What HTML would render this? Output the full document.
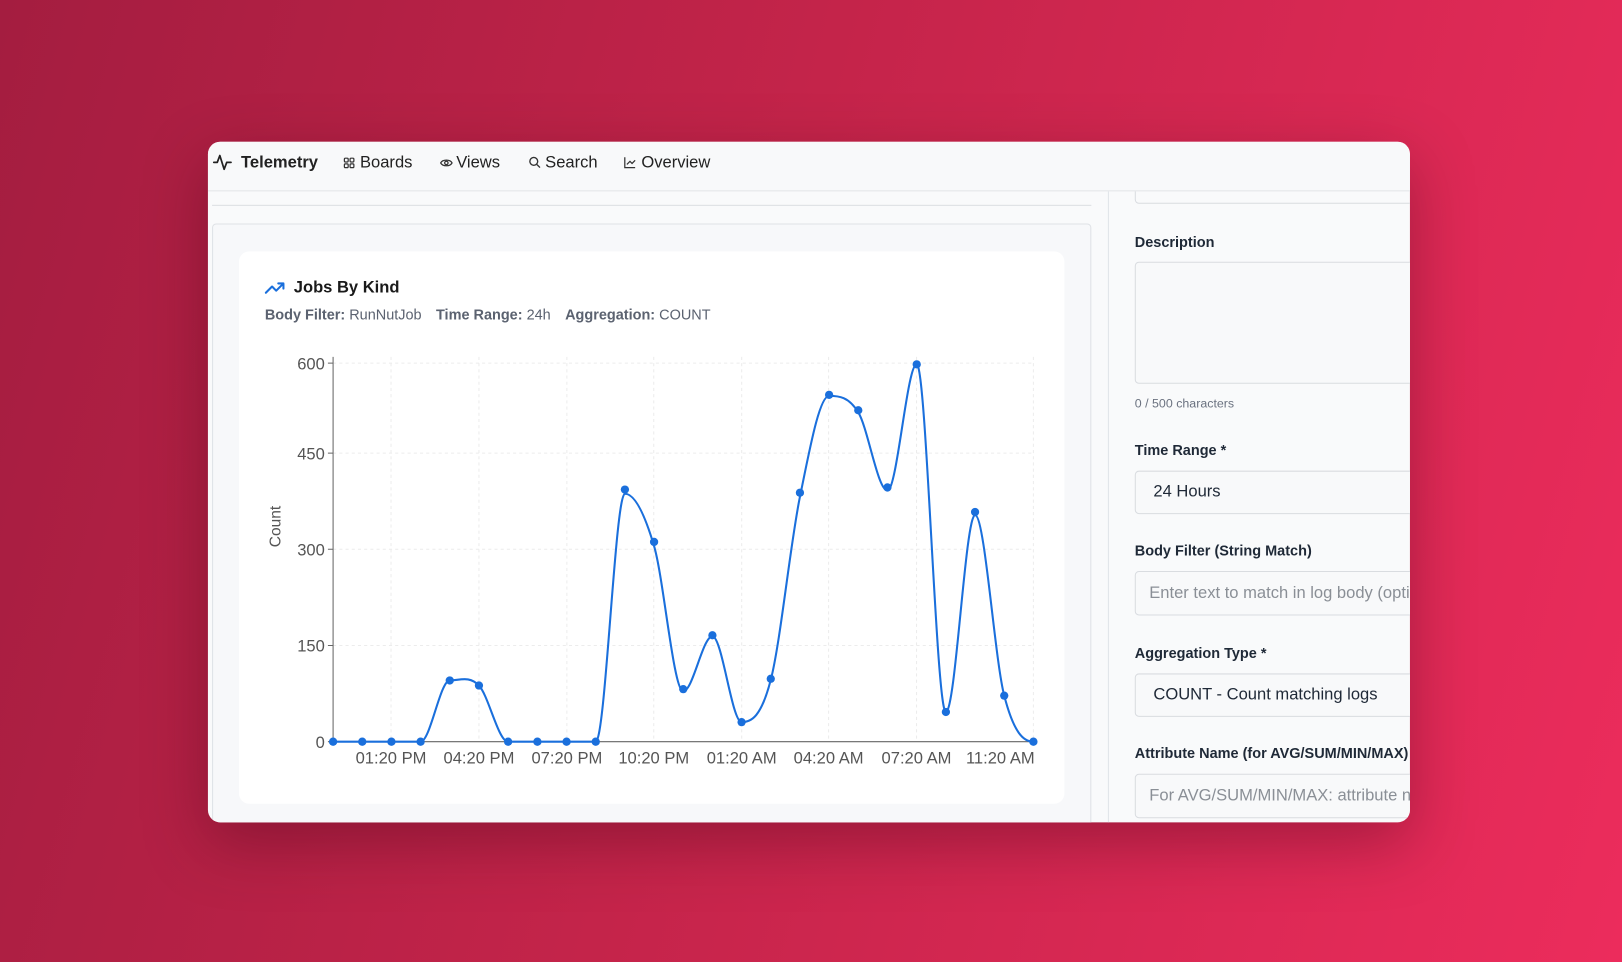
<!DOCTYPE html>
<html><head><meta charset="utf-8"><style>
*{box-sizing:border-box;margin:0;padding:0}
html,body{width:1622px;height:962px;overflow:hidden}
body{background:linear-gradient(105deg,#a41d40 0%,#c4244a 45%,#ec2c5c 100%);font-family:"Liberation Sans",sans-serif}
#s{position:absolute;left:0;top:0;width:1568px;height:930px;transform:scale(1.03444);transform-origin:0 0}
.win{position:absolute;left:201px;top:137px;width:1162px;height:658px;border-radius:12px;overflow:hidden;background:#f9fafb;box-shadow:0 20px 60px rgba(60,0,20,.35)}
.hdr{position:absolute;left:0;top:0;width:100%;height:48px;background:#f8f9fa;border-bottom:1px solid #e3e5e8;z-index:2}
.hdr span{position:absolute;top:12px;font-size:16px;color:#222}
.lbl{position:absolute;left:896px;font-size:14px;font-weight:bold;color:#1f2937;white-space:nowrap}
.inp{position:absolute;left:896px;width:300px;border:1px solid #d9dce0;border-radius:4px;background:#f8f9fa;font-size:16px;padding-left:17px;color:#1f2937;white-space:nowrap;overflow:hidden}
.ph{color:#8a8f96}
</style></head><body><div id="s">
<div class="win">
 <div class="hdr">
  <svg style="position:absolute;left:4px;top:10px" width="20" height="20" viewBox="0 0 24 24" fill="none" stroke="#222" stroke-width="2" stroke-linecap="round" stroke-linejoin="round"><path d="M2 12h4l3-8 5 16 3-8h5"/></svg>
  <span style="left:32px;font-weight:bold">Telemetry</span>
  <svg style="position:absolute;left:131px;top:15px" width="11" height="11" viewBox="0 0 12 12" fill="none" stroke="#333" stroke-width="1.3"><rect x="1" y="1" width="4" height="4" rx="1"/><rect x="7" y="1" width="4" height="4" rx="1"/><rect x="1" y="7" width="4" height="4" rx="1"/><rect x="7" y="7" width="4" height="4" rx="1"/></svg>
  <span style="left:147px">Boards</span>
  <svg style="position:absolute;left:224px;top:15px" width="13" height="11" viewBox="0 0 14 12" fill="none" stroke="#333" stroke-width="1.3"><path d="M1 6C3 2 11 2 13 6 11 10 3 10 1 6Z"/><circle cx="7" cy="6" r="1.8"/></svg>
  <span style="left:240px">Views</span>
  <svg style="position:absolute;left:310px;top:14px" width="12" height="12" viewBox="0 0 12 12" fill="none" stroke="#333" stroke-width="1.3"><circle cx="5" cy="5" r="3.8"/><path d="M8 8l3 3"/></svg>
  <span style="left:326px">Search</span>
  <svg style="position:absolute;left:402px;top:14px" width="12" height="12" viewBox="0 0 12 12" fill="none" stroke="#333" stroke-width="1.2"><path d="M1 1v10h10M3 8l3-3 2 2 3-3"/></svg>
  <span style="left:419px">Overview</span>
 </div>
 <div style="position:absolute;left:4px;top:61px;width:850px;height:1px;background:#dcdfe3"></div>
 <div style="position:absolute;left:4px;top:79px;width:850px;height:600px;border:1px solid #dfe2e6;border-radius:4px;background:#f7f8fa"></div>
 <div style="position:absolute;left:30px;top:106px;width:798px;height:534px;background:#fff;border-radius:10px"></div>
 <div style="position:absolute;left:870px;top:48px;width:1px;height:620px;background:#e1e4e8"></div>
 <div style="position:absolute;left:896px;top:20px;width:300px;height:40px;border:1px solid #d9dce0;border-radius:4px"></div>
 <div class="lbl" style="top:89px">Description</div>
 <div class="inp" style="top:116px;height:118px"></div>
 <div style="position:absolute;left:896px;top:246px;font-size:12px;color:#6b7280">0 / 500 characters</div>
 <div class="lbl" style="top:290px">Time Range *</div>
 <div class="inp" style="top:318px;height:42px;line-height:40px">24 Hours</div>
 <div class="lbl" style="top:387px">Body Filter (String Match)</div>
 <div class="inp ph" style="top:415px;height:43px;line-height:41px;padding-left:13px">Enter text to match in log body (optional)</div>
 <div class="lbl" style="top:486px">Aggregation Type *</div>
 <div class="inp" style="top:514px;height:42px;line-height:40px">COUNT - Count matching logs</div>
 <div class="lbl" style="top:583px">Attribute Name (for AVG/SUM/MIN/MAX)</div>
 <div class="inp ph" style="top:611px;height:43px;line-height:41px;padding-left:13px">For AVG/SUM/MIN/MAX: attribute name</div>
</div>
<svg style="position:absolute;left:0;top:0" width="1568" height="930">
 <path d="M257 283l6-6 4 4 7-7M269 274h5v5" fill="none" stroke="#1a6fdc" stroke-width="2" stroke-linecap="round" stroke-linejoin="round"/>
 <text x="284" y="283" font-family="Liberation Sans" font-size="16" font-weight="bold" fill="#1a1a1a">Jobs By Kind</text>
 <text x="256" y="309" font-family="Liberation Sans" font-size="14" fill="#5b6270"><tspan font-weight="bold">Body Filter:</tspan> RunNutJob <tspan dx="10" font-weight="bold">Time Range:</tspan> 24h <tspan dx="10" font-weight="bold">Aggregation:</tspan> COUNT</text>
 <g stroke="#ececec" stroke-dasharray="3 3">
  <path d="M322 351H999M322 438H999M322 531H999M322 624H999M378 345V717M463 345V717M548 345V717M632 345V717M717 345V717M801 345V717M886 345V717M999 345V717"/>
 </g>
 <path d="M322 345V717H999M317 351h5M317 438h5M317 531h5M317 624h5M317 717h5" stroke="#666" fill="none"/>
 <g font-family="Liberation Sans" font-size="16" fill="#555" text-anchor="end">
  <text x="314" y="357">600</text><text x="314" y="444">450</text><text x="314" y="537">300</text><text x="314" y="630">150</text><text x="314" y="723">0</text>
 </g>
 <text transform="translate(271 509) rotate(-90)" font-family="Liberation Sans" font-size="15" fill="#555" text-anchor="middle">Count</text>
 <g font-family="Liberation Sans" font-size="16" fill="#555" text-anchor="middle">
  <text x="378" y="738">01:20 PM</text><text x="463" y="738">04:20 PM</text><text x="548" y="738">07:20 PM</text><text x="632" y="738">10:20 PM</text><text x="717" y="738">01:20 AM</text><text x="801" y="738">04:20 AM</text><text x="886" y="738">07:20 AM</text><text x="967" y="738">11:20 AM</text>
 </g>
 <path fill="none" stroke="#1a6fdc" stroke-width="2" d="M322 717C331.4 717 340.8 717 350.2 717C359.6 717 369 717 378.4 717C387.8 717 397.2 717 406.6 717C416 717 425.4 657.8 434.8 657.8C444.2 657.8 453.6 652.8 463 662.7C472.4 672.6 481.8 717 491.2 717C500.6 717 510.1 717 519.5 717C528.9 717 538.3 717 547.7 717C557.1 717 566.5 717 575.9 717C585.3 717 594.7 477.3 604.1 477.3C613.5 477.3 622.9 496.1 632.3 527.9C641.7 559.7 651.1 668.2 660.5 668.2C669.9 668.2 679.3 615.1 688.7 615.1C698.1 615.1 707.5 698.1 716.9 698.1C726.3 698.1 735.7 693.5 745.1 657.2C754.5 620.9 763.9 526.1 773.3 480.3C782.7 434.5 792.1 382.7 801.5 382.7C810.9 382.7 820.3 383.3 829.7 398.6C839.1 413.9 848.5 474.2 857.9 474.2C867.3 474.2 876.8 352.2 886.2 352.2C895.6 352.2 905 688.3 914.4 688.3C923.8 688.3 933.2 498 942.6 498C952 498 961.4 636 970.8 672.5C980.2 709 989.6 717 999 717"/>
 <g fill="#1a6fdc">
  <circle cx="322" cy="717" r="4"/><circle cx="350.2" cy="717" r="4"/><circle cx="378.4" cy="717" r="4"/><circle cx="406.6" cy="717" r="4"/><circle cx="434.8" cy="657.8" r="4"/><circle cx="463" cy="662.7" r="4"/><circle cx="491.2" cy="717" r="4"/><circle cx="519.5" cy="717" r="4"/><circle cx="547.7" cy="717" r="4"/><circle cx="575.9" cy="717" r="4"/><circle cx="604.1" cy="473.3" r="4"/><circle cx="632.3" cy="523.9" r="4"/><circle cx="660.5" cy="666.2" r="4"/><circle cx="688.7" cy="614.1" r="4"/><circle cx="716.9" cy="698.1" r="4"/><circle cx="745.1" cy="656.2" r="4"/><circle cx="773.3" cy="476.3" r="4"/><circle cx="801.5" cy="381.7" r="4"/><circle cx="829.7" cy="396.6" r="4"/><circle cx="857.9" cy="471.2" r="4"/><circle cx="886.2" cy="352.2" r="4"/><circle cx="914.4" cy="688.3" r="4"/><circle cx="942.6" cy="495" r="4"/><circle cx="970.8" cy="672.5" r="4"/><circle cx="999" cy="717" r="4"/>
 </g>
</svg>
</div></body></html>
